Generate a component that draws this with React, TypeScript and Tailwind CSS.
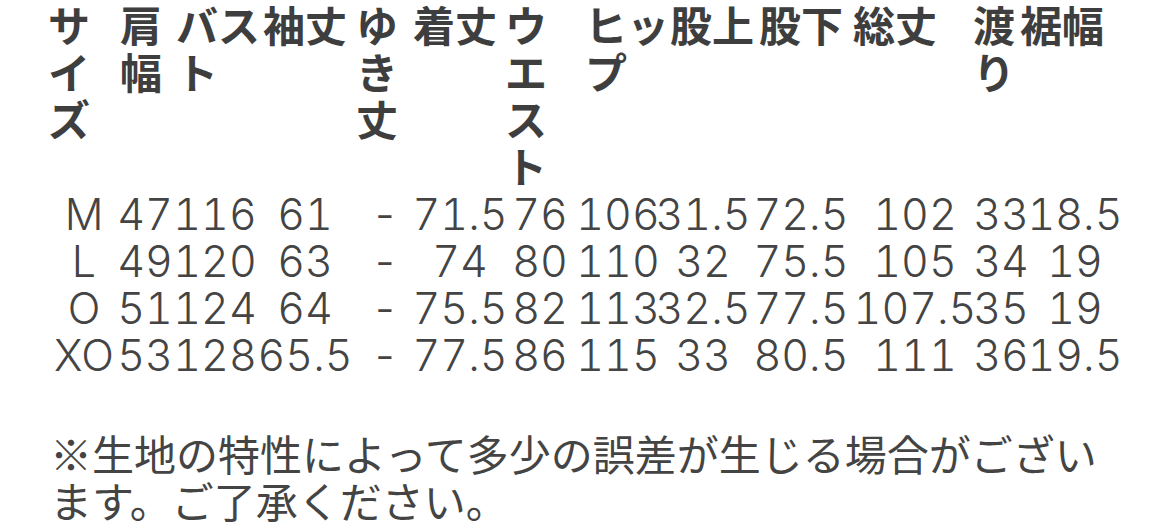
const HEADERS = [
  "サイズ",
  "肩幅",
  "バスト",
  "袖丈",
  "ゆき丈",
  "着丈",
  "ウエスト",
  "ヒップ",
  "股上",
  "股下",
  "総丈",
  "渡り",
  "裾幅",
];

const ROWS = [
  ["M", "47", "116", "61", "-", "71.5", "76", "106", "31.5", "72.5", "102", "33", "18.5"],
  ["L", "49", "120", "63", "-", "74", "80", "110", "32", "75.5", "105", "34", "19"],
  ["O", "51", "124", "64", "-", "75.5", "82", "113", "32.5", "77.5", "107.5", "35", "19"],
  ["XO", "53", "128", "65.5", "-", "77.5", "86", "115", "33", "80.5", "111", "36", "19.5"],
];

const JP = "font-['Noto_Sans_CJK_JP','Noto_Sans',sans-serif]";

export default function App() {
  return (
    <div className="w-[1170px] h-[532px] overflow-hidden bg-white text-[#3e3e3e]">
      {/* header row: narrow columns make the labels wrap per character */}
      <div
        className={`grid grid-cols-[72px_56px_87px_93px_57px_92px_80px_85px_89px_94px_120px_47px_100px] pl-[48px] text-[42px] leading-[47px] font-bold ${JP}`}
      >
        {HEADERS.map((h) => (
          <div key={h} className="text-left">
            {h}
          </div>
        ))}
      </div>

      {/* size rows */}
      <div className="pt-[3px] pl-[48px] font-['Inter','Lato',sans-serif] font-light tabular-nums text-[43px] leading-[47px] text-[#444]">
        {ROWS.map((row) => (
          <div
            key={row[0]}
            className="grid grid-cols-[72px_50px_90px_90px_70px_80px_80px_76px_94px_102px_126px_46px_102px]"
          >
            {row.map((cell, i) => (
              <div key={i} className="flex justify-center whitespace-nowrap">
                {cell}
              </div>
            ))}
          </div>
        ))}
      </div>

      {/* note */}
      <p
        className={`mt-[50px] ml-[50px] w-[1072px] text-[42px] leading-[47px] font-normal text-[#444] ${JP}`}
      >
        ※生地の特性によって多少の誤差が生じる場合がございます。ご了承ください。
      </p>
    </div>
  );
}
